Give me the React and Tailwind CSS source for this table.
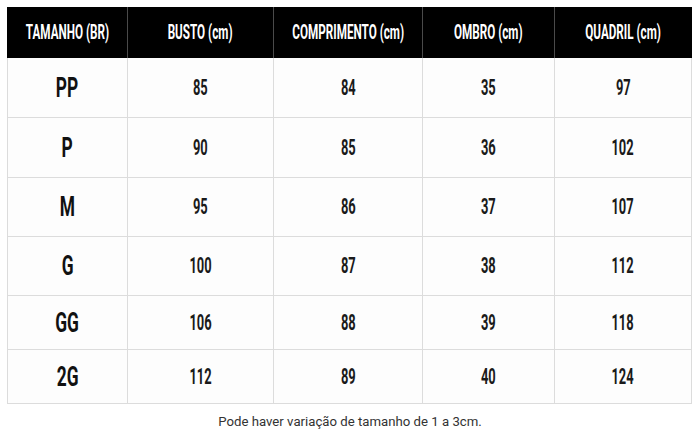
import React from "react";

const headers = ["TAMANHO (BR)", "BUSTO (cm)", "COMPRIMENTO (cm)", "OMBRO (cm)", "QUADRIL (cm)"];
const rows = [
  { h: "h-[60px]", v: ["PP", "85", "84", "35", "97"] },
  { h: "h-[60px]", v: ["P", "90", "85", "36", "102"] },
  { h: "h-[59px]", v: ["M", "95", "86", "37", "107"] },
  { h: "h-[59px]", v: ["G", "100", "87", "38", "112"] },
  { h: "h-[54px]", v: ["GG", "106", "88", "39", "118"] },
  { h: "h-[54px]", v: ["2G", "112", "89", "40", "124"] },
];

export default function App() {
  return (
    <div className="w-[700px] h-[442px] bg-white pt-[7px] pl-[7px] font-['Roboto',sans-serif]">
      <div className="grid w-[685px] grid-cols-[121px_146px_149px_132px_137px]">
        {headers.map((t, i) => (
          <div
            key={t}
            className={`h-[51px] bg-black flex items-center justify-center ${i < 4 ? "border-r border-[#4a4a4a]" : ""}`}
          >
            <span className="inline-block scale-x-[0.6] whitespace-nowrap text-[19.5px] font-bold text-white leading-none">
              {t}
            </span>
          </div>
        ))}
        {rows.map((r) =>
          r.v.map((t, i) => (
            <div
              key={r.v[0] + i}
              className={`${r.h} bg-[#fdfdfd] flex items-center justify-center border-b border-r border-[#dcdcdc] ${i === 0 ? "border-l" : ""}`}
            >
              {i === 0 ? (
                <span className="inline-block scale-x-[0.62] text-[28px] font-bold text-[#111] leading-none">{t}</span>
              ) : (
                <span className="inline-block scale-x-[0.6] text-[21.5px] font-bold text-[#1a1a1a] leading-none">{t}</span>
              )}
            </div>
          ))
        )}
      </div>
      <p className="mt-[8px] w-[686px] text-center text-[13.2px] leading-[20px] text-[#333]">
        Pode haver variação de tamanho de 1 a 3cm.
      </p>
    </div>
  );
}
